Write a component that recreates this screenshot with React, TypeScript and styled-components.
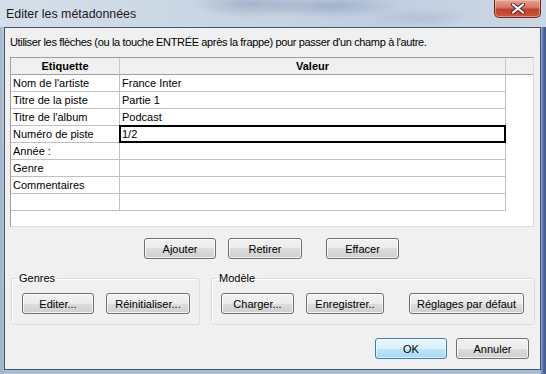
import styled, { createGlobalStyle, css } from 'styled-components'

const GlobalStyle = createGlobalStyle`
  html, body {
    margin: 0;
    padding: 0;
    background: #9fb3c9;
  }
  * {
    box-sizing: border-box;
  }
`

const rows = [
  { label: "Nom de l'artiste", value: 'France Inter' },
  { label: 'Titre de la piste', value: 'Partie 1' },
  { label: "Titre de l'album", value: 'Podcast' },
  { label: 'Numéro de piste', value: '1/2', selected: true },
  { label: 'Année :', value: '' },
  { label: 'Genre', value: '' },
  { label: 'Commentaires', value: '' },
  { label: '', value: '' },
]

const App = () => {
  return (
    <>
      <GlobalStyle />
      <Window>
        <TitleBar>
          <Title>Editer les métadonnées</Title>
          <CloseButton>
            <svg width="14" height="11" viewBox="0 0 14 11">
              <path d="M2 1.5 L12 9.5 M12 1.5 L2 9.5" stroke="#4a2a2a" strokeWidth="4" strokeLinecap="round" />
              <path d="M2 1.5 L12 9.5 M12 1.5 L2 9.5" stroke="#ffffff" strokeWidth="2.2" strokeLinecap="round" />
            </svg>
          </CloseButton>
        </TitleBar>
        <Client>
          <Hint>Utiliser les flèches (ou la touche ENTRÉE après la frappe) pour passer d'un champ à l'autre.</Hint>
          <Grid>
            <HeaderRow>
              <HeadCell $width={108}>Etiquette</HeadCell>
              <HeadCell $width={385}>Valeur</HeadCell>
            </HeaderRow>
            {rows.map((row, i) => (
              <Row key={i}>
                <Cell $width={108}>{row.label}</Cell>
                <Cell $width={385} $selected={row.selected}>{row.value}</Cell>
              </Row>
            ))}
          </Grid>
          <EditButtons>
            <Button $width={72}>Ajouter</Button>
            <Button $width={74} $gap={12}>Retirer</Button>
            <Button $width={73} $gap={24}>Effacer</Button>
          </EditButtons>
          <Groups>
            <Group $width={189}>
              <Legend>Genres</Legend>
              <GroupBody $pad={10}>
                <Button $width={72}>Editer...</Button>
                <Button $width={84} $gap={12}>Réinitialiser...</Button>
              </GroupBody>
            </Group>
            <Group $width={324}>
              <Legend>Modèle</Legend>
              <GroupBody $pad={9}>
                <Button $width={73}>Charger...</Button>
                <Button $width={78} $gap={12}>Enregistrer..</Button>
                <Button $width={115} $gap={25}>Réglages par défaut</Button>
              </GroupBody>
            </Group>
          </Groups>
          <Footer>
            <Button $width={72} $primary>OK</Button>
            <Button $width={73} $gap={9}>Annuler</Button>
          </Footer>
        </Client>
      </Window>
    </>
  )
}

const Window = styled.div`
  width: 546px;
  height: 374px;
  display: flex;
  flex-direction: column;
  background:
    linear-gradient(to right, rgba(160, 178, 200, 0.9) 0, rgba(160, 178, 200, 0) 6px),
    linear-gradient(to left, #3f5488 0, #5a70a8 3px, rgba(90, 112, 168, 0) 6px),
    linear-gradient(to bottom, #d3deea 0, #c3d2e2 30px, #a9bcd2 100%);
  font-family: Tahoma, 'Liberation Sans', Arial, sans-serif;
  font-size: 11px;
  color: #000;
`

const TitleBar = styled.div`
  height: 27px;
  flex-shrink: 0;
  display: flex;
  align-items: flex-start;
  justify-content: space-between;
  padding: 0 5px 0 6px;
  background:
    radial-gradient(ellipse 60px 14px at 250px 4px, rgba(120, 140, 175, 0.45), transparent),
    radial-gradient(ellipse 70px 12px at 330px 6px, rgba(110, 130, 170, 0.4), transparent),
    radial-gradient(ellipse 50px 10px at 420px 18px, rgba(150, 165, 190, 0.35), transparent),
    linear-gradient(to right, #d5dfea, #c9d5e3 40%, #c0cee0 70%, #cbd7e5);
`

const Title = styled.span`
  margin-top: 6px;
  font-family: 'Segoe UI', 'Liberation Sans', Arial, sans-serif;
  font-size: 12.4px;
  line-height: 16px;
  color: #1a1a1a;
`

const CloseButton = styled.div`
  width: 47px;
  height: 18px;
  display: flex;
  align-items: center;
  justify-content: center;
  border: 1px solid #6b2a22;
  border-top: none;
  border-radius: 0 0 5px 5px;
  background: linear-gradient(to bottom, #e5a596 0, #d7735f 45%, #c2402b 55%, #c95a40 100%);
  box-shadow: inset 0 0 0 1px rgba(255, 210, 200, 0.45);
`

const Client = styled.div`
  flex: 1;
  margin: 0 5px 4px 4px;
  border: 1px solid #44546a;
  background: #f0f0f0;
  display: flex;
  flex-direction: column;
`

const Hint = styled.div`
  margin: 6px 0 0 5px;
  height: 16px;
  line-height: 16px;
  letter-spacing: -0.35px;
  white-space: nowrap;
`

const Grid = styled.div`
  margin: 7px 0 0 5px;
  width: 524px;
  height: 170px;
  background: #fff;
  border: 1px solid;
  border-color: #a0a0a0 #dcdcdc #dcdcdc #a0a0a0;
  display: flex;
  flex-direction: column;
`

const HeaderRow = styled.div`
  display: flex;
  height: 17px;
  background: #f0f0f0;
  border-bottom: 1px solid #a0a0a0;
`

const HeadCell = styled.div<{ $width: number }>`
  width: ${(p) => p.$width + 1}px;
  border-right: 1px solid #c8c8c8;
  text-align: center;
  font-weight: bold;
  line-height: 16px;
`

const Row = styled.div`
  display: flex;
  height: 17px;
`

const Cell = styled.div<{ $width: number; $selected?: boolean }>`
  position: relative;
  width: ${(p) => p.$width + 1}px;
  border-right: 1px solid #c0c0c0;
  border-bottom: 1px solid #c0c0c0;
  padding-left: 2px;
  line-height: 16px;
  white-space: nowrap;
  ${(p) =>
    p.$selected &&
    css`
      &::after {
        content: '';
        position: absolute;
        left: -1px;
        top: -1px;
        right: -1px;
        bottom: -1px;
        border: 2px solid #000;
      }
    `}
`

const EditButtons = styled.div`
  display: flex;
  margin: 11px 0 0 139px;
`

const Button = styled.div<{ $width: number; $gap?: number; $primary?: boolean }>`
  width: ${(p) => p.$width}px;
  height: 21px;
  margin-left: ${(p) => p.$gap ?? 0}px;
  display: flex;
  align-items: center;
  justify-content: center;
  border: 1px solid #707070;
  border-radius: 3px;
  background: linear-gradient(to bottom, #f2f2f2 0, #ebebeb 50%, #dddddd 50%, #cfcfcf 100%);
  box-shadow: inset 0 0 0 1px rgba(255, 255, 255, 0.7);
  white-space: nowrap;
  ${(p) =>
    p.$primary &&
    css`
      border-color: #3c7fb1;
      background: linear-gradient(to bottom, #eaf6fd 0, #d9f0fc 50%, #bee6fd 50%, #a7d9f5 100%);
      box-shadow: inset 0 0 0 1px rgba(255, 255, 255, 0.6);
    `}
`

const Groups = styled.div`
  display: flex;
  gap: 11px;
  margin: 13px 0 0 6px;
`

const Group = styled.fieldset<{ $width: number }>`
  width: ${(p) => p.$width}px;
  margin: 0;
  padding: 0;
  min-width: 0;
  border: 1px solid #d5dfe5;
  border-radius: 3px;
  box-shadow: inset 1px 1px 0 #fff;
`

const Legend = styled.legend`
  margin-left: 5px;
  padding: 0 2px;
  line-height: 12px;
  font-size: 11px;
`

const GroupBody = styled.div<{ $pad: number }>`
  display: flex;
  padding: 9px 0 10px ${(p) => p.$pad}px;
`

const Footer = styled.div`
  display: flex;
  justify-content: flex-end;
  margin: 13px 11px 0 0;
`

export default App
